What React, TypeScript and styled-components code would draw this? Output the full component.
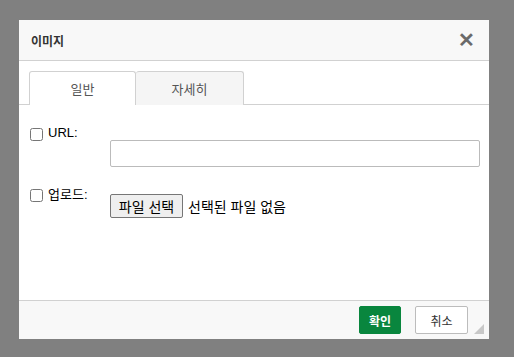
import React from "react";
import styled, { createGlobalStyle } from "styled-components";

const GlobalStyle = createGlobalStyle`
  html, body {
    margin: 0;
    padding: 0;
    background: #808080;
    font-family: Arial, "Liberation Sans", "Noto Sans CJK KR", sans-serif;
  }
`;

const Backdrop = styled.div`
  width: 514px;
  height: 357px;
  padding: 20px 0 0 19px;
  box-sizing: border-box;
`;

const Dialog = styled.div`
  width: 470px;
  height: 319px;
  background: #fff;
  display: flex;
  flex-direction: column;
  position: relative;
`;

const Header = styled.div`
  height: 40px;
  background: #f8f8f8;
  border-bottom: 1px solid #d1d1d1;
  display: flex;
  align-items: center;
  justify-content: space-between;
  padding: 0 14px 0 12px;
`;

const Title = styled.div`
  font-size: 12px;
  font-weight: bold;
  color: #333;
`;

const Close = styled.div`
  font-size: 20px;
  font-weight: bold;
  color: #6a6a6a;
  line-height: 1;
`;

const Tabs = styled.div`
  display: flex;
  padding: 10px 0 0 10px;
  border-bottom: 1px solid #d1d1d1;
`;

const Tab = styled.div<{ $active?: boolean }>`
  width: ${(p) => (p.$active ? "107px" : "108px")};
  height: 34px;
  box-sizing: border-box;
  border: 1px solid #d1d1d1;
  border-bottom: none;
  border-left: ${(p) => (p.$active ? "1px solid #d1d1d1" : "none")};
  border-radius: 3px 3px 0 0;
  background: ${(p) => (p.$active ? "#fff" : "#f5f5f5")};
  margin-bottom: -1px;
  display: flex;
  align-items: center;
  justify-content: center;
  font-size: 13px;
  color: #555;
`;

const Body = styled.div`
  flex: 1;
  padding: 20px 9px 0 11px;
  display: flex;
  flex-direction: column;
  gap: 17px;
`;

const Row = styled.div`
  display: flex;
  flex-direction: column;
`;

const LabelLine = styled.label`
  display: flex;
  align-items: center;
  gap: 5px;
  font-size: 13px;
  color: #000;
`;

const Check = styled.input`
  width: 13px;
  height: 13px;
  margin: 0;
  position: relative;
  top: 2px;
`;

const FieldIndent = styled.div<{ $lift?: number }>`
  padding-left: 80px;
  margin-top: ${(p) => p.$lift ?? 0}px;
  display: flex;
  align-items: center;
  gap: 5px;
  font-size: 14px;
`;

const TextInput = styled.input`
  width: 370px;
  height: 27px;
  box-sizing: border-box;
  border: 1px solid #bbb;
  border-radius: 2px;
`;

const FileButton = styled.button`
  font-family: inherit;
  font-size: 14px;
  height: 24px;
  width: 73px;
  padding: 0;
  border: 1px solid #767676;
  border-radius: 2px;
  background: #efefef;
  color: #000;
`;

const Footer = styled.div`
  height: 38px;
  background: #f8f8f8;
  border-top: 1px solid #d1d1d1;
  display: flex;
  justify-content: flex-end;
  align-items: center;
  gap: 14px;
  padding: 0 21px 0 0;
`;

const Btn = styled.button<{ $primary?: boolean }>`
  font-family: inherit;
  height: 28px;
  box-sizing: border-box;
  font-size: 12px;
  font-weight: ${(p) => (p.$primary ? "bold" : "normal")};
  color: ${(p) => (p.$primary ? "#fff" : "#333")};
  background: ${(p) => (p.$primary ? "#09863e" : "#fff")};
  border: 1px solid ${(p) => (p.$primary ? "#09863e" : "#bcbcbc")};
  border-radius: 2px;
  padding: 0;
  width: ${(p) => (p.$primary ? "42px" : "53px")};
`;

const Grip = styled.div`
  position: absolute;
  right: 5px;
  bottom: 5px;
  width: 0;
  height: 0;
  border-left: 10px solid transparent;
  border-bottom: 10px solid #c8c8c8;
`;

export default function App() {
  return (
    <>
      <GlobalStyle />
      <Backdrop>
        <Dialog>
          <Header>
            <Title>이미지</Title>
            <Close>✕</Close>
          </Header>
          <Tabs>
            <Tab $active>일반</Tab>
            <Tab>자세히</Tab>
          </Tabs>
          <Body>
            <Row>
              <LabelLine>
                <Check type="checkbox" />
                URL:
              </LabelLine>
              <FieldIndent>
                <TextInput type="text" />
              </FieldIndent>
            </Row>
            <Row>
              <LabelLine>
                <Check type="checkbox" />
                업로드:
              </LabelLine>
              <FieldIndent $lift={-9}>
                <FileButton>파일 선택</FileButton>
                <span>선택된 파일 없음</span>
              </FieldIndent>
            </Row>
          </Body>
          <Footer>
            <Btn $primary>확인</Btn>
            <Btn>취소</Btn>
          </Footer>
          <Grip />
        </Dialog>
      </Backdrop>
    </>
  );
}
